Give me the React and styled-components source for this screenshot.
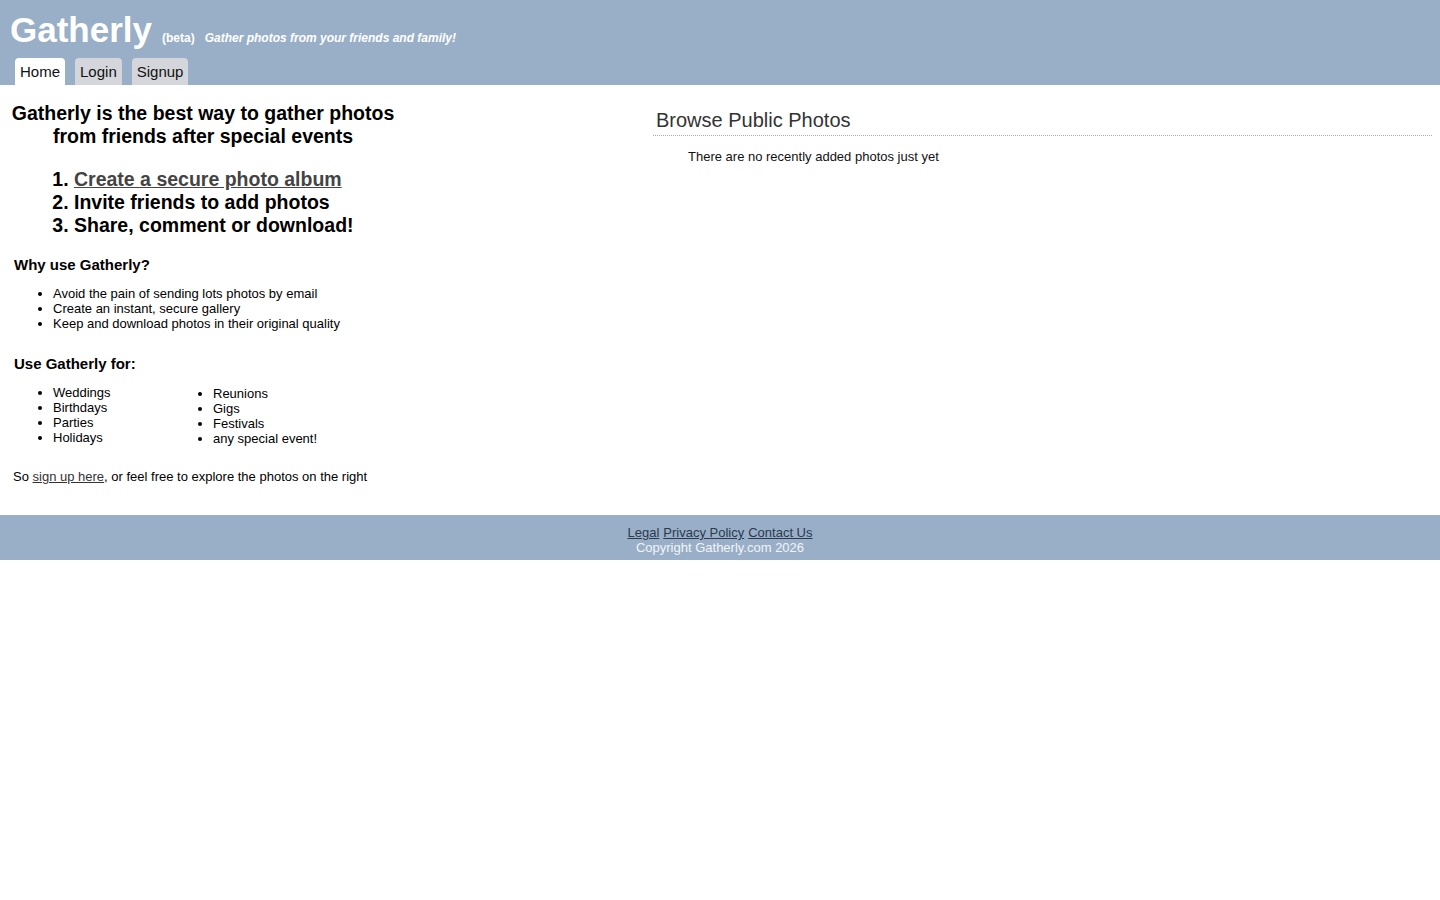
import React from 'react';
import styled, { createGlobalStyle } from 'styled-components';

const GlobalStyle = createGlobalStyle`
  body {
    margin: 0;
    font-family: "Liberation Sans", Arial, sans-serif;
    background: #fff;
    color: #000;
  }
`;

const Header = styled.header`
  background: #99afc8;
  height: 85px;
  display: flex;
  flex-direction: column;
  justify-content: space-between;
`;

const TitleRow = styled.div`
  display: flex;
  align-items: baseline;
  padding: 10px 0 0 10px;
  color: #fff;
`;

const Logo = styled.span`
  font-size: 35px;
  font-weight: bold;
  line-height: 40px;
`;

const Beta = styled.span`
  font-size: 12px;
  font-weight: bold;
  margin-left: 10px;
`;

const Tagline = styled.span`
  font-size: 12px;
  font-weight: bold;
  font-style: italic;
  margin-left: 10px;
`;

const Tabs = styled.nav`
  display: flex;
  gap: 10px;
  padding-left: 15px;
`;

const Tab = styled.a`
  display: block;
  height: 27px;
  line-height: 28px;
  padding: 0 5px;
  font-size: 15px;
  color: #111;
  text-decoration: none;
  border-radius: 4px 4px 0 0;
  background: ${p => (p.$active ? '#fff' : '#d4d6db')};
`;

const Main = styled.main`
  display: flex;
  align-items: flex-start;
  padding: 17px 8px 30px 0;
`;

const Left = styled.section`
  width: 406px;
  margin-right: 247px;
`;

const Lead = styled.h1`
  margin: 0;
  font-size: 19.5px;
  line-height: 23px;
  text-align: center;
  font-weight: bold;
`;

const Steps = styled.ol`
  margin: 20px 0 0 34px;
  padding-left: 40px;
  font-size: 19.5px;
  line-height: 23px;
  font-weight: bold;
`;

const StepLink = styled.a`
  color: #444;
  text-decoration: underline;
`;

const Sub = styled.h3`
  margin: ${p => p.$top} 0 0 14px;
  font-size: 15px;
  line-height: 18px;
  font-weight: bold;
`;

const Bullets = styled.ul`
  margin: 12px 0 0 13px;
  padding-left: 40px;
  font-size: 13px;
  line-height: 15px;
`;

const Columns = styled.div`
  display: flex;
  margin-top: 12px;
`;

const Col = styled.ul`
  margin: ${p => p.$top || '0'} 0 0 ${p => p.$left || '13px'};
  padding-left: 40px;
  width: ${p => p.$width || 'auto'};
  font-size: 13px;
  line-height: 15px;
  box-sizing: border-box;
`;

const Outro = styled.p`
  margin: 23px 0 0 13px;
  font-size: 13px;
  line-height: 15px;
  a { color: #333; }
`;

const Right = styled.section`
  flex: 1;
  padding-top: 7px;
`;

const BrowseTitle = styled.h2`
  margin: 0;
  padding: 0 0 3px 3px;
  font-weight: normal;
  font-size: 20px;
  line-height: 23px;
  color: #333;
  border-bottom: 1px dotted #aaa;
`;

const Empty = styled.p`
  margin: 13px 0 0 35px;
  font-size: 13px;
  line-height: 15px;
  color: #111;
`;

const Footer = styled.footer`
  background: #99afc8;
  margin-top: 1px;
  padding: 10px 0 5px;
  text-align: center;
  font-size: 13px;
  line-height: 15px;
  color: #f2f4f8;
`;

const FooterLinks = styled.div`
  display: flex;
  justify-content: center;
  gap: 4px;
  a { color: #2b3a4c; }
`;

export default function App() {
  return (
    <>
      <GlobalStyle />
      <Header>
        <TitleRow>
          <Logo>Gatherly</Logo>
          <Beta>(beta)</Beta>
          <Tagline>Gather photos from your friends and family!</Tagline>
        </TitleRow>
        <Tabs>
          <Tab href="#" $active>Home</Tab>
          <Tab href="#">Login</Tab>
          <Tab href="#">Signup</Tab>
        </Tabs>
      </Header>
      <Main>
        <Left>
          <Lead>
            Gatherly is the best way to gather photos
            <br />
            from friends after special events
          </Lead>
          <Steps>
            <li><StepLink href="#">Create a secure photo album</StepLink></li>
            <li>Invite friends to add photos</li>
            <li>Share, comment or download!</li>
          </Steps>
          <Sub $top="19px">Why use Gatherly?</Sub>
          <Bullets>
            <li>Avoid the pain of sending lots photos by email</li>
            <li>Create an instant, secure gallery</li>
            <li>Keep and download photos in their original quality</li>
          </Bullets>
          <Sub $top="24px">Use Gatherly for:</Sub>
          <Columns>
            <Col $width="160px">
              <li>Weddings</li>
              <li>Birthdays</li>
              <li>Parties</li>
              <li>Holidays</li>
            </Col>
            <Col $top="1px" $left="0">
              <li>Reunions</li>
              <li>Gigs</li>
              <li>Festivals</li>
              <li>any special event!</li>
            </Col>
          </Columns>
          <Outro>
            So <a href="#">sign up here</a>, or feel free to explore the photos on the right
          </Outro>
        </Left>
        <Right>
          <BrowseTitle>Browse Public Photos</BrowseTitle>
          <Empty>There are no recently added photos just yet</Empty>
        </Right>
      </Main>
      <Footer>
        <FooterLinks>
          <a href="#">Legal</a>
          <a href="#">Privacy Policy</a>
          <a href="#">Contact Us</a>
        </FooterLinks>
        <div>Copyright Gatherly.com 2026</div>
      </Footer>
    </>
  );
}
